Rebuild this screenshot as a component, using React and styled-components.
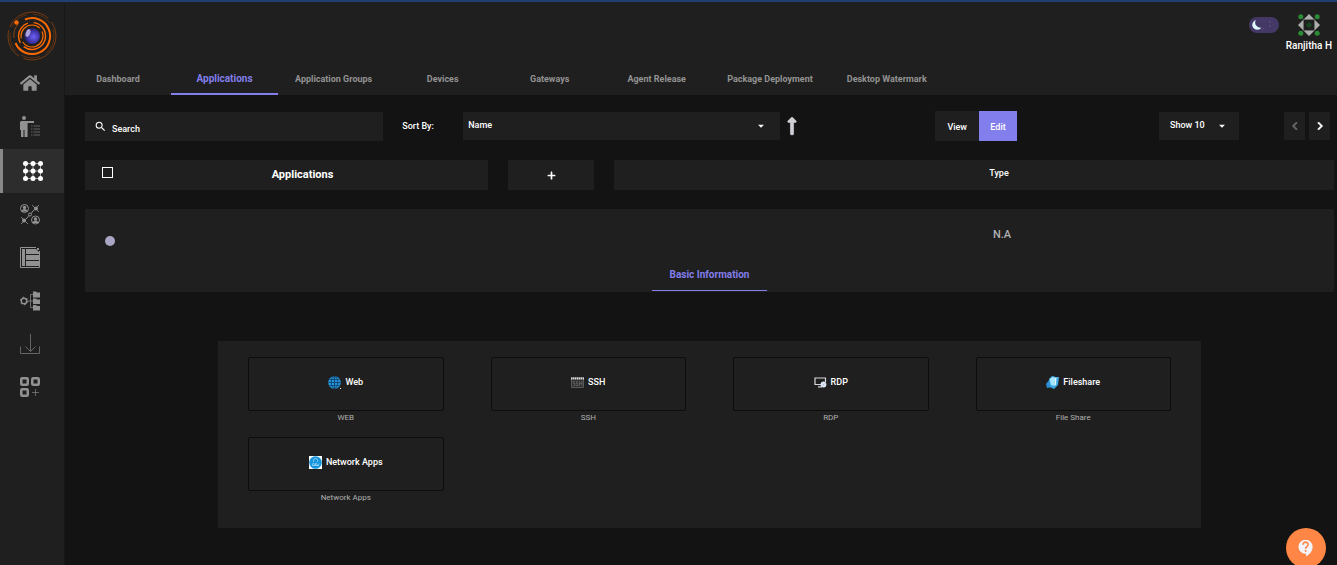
import { useState } from "react";
import styled, { createGlobalStyle } from "styled-components";
import {
	MdArrowDropDown,
	MdChevronLeft,
	MdChevronRight,
	MdContactSupport,
	MdSearch,
} from "react-icons/md";
import { FaHome, FaLongArrowAltUp, FaPlus } from "react-icons/fa";

const tabs = [
	"Dashboard",
	"Applications",
	"Application Groups",
	"Devices",
	"Gateways",
	"Agent Release",
	"Package Deployment",
	"Desktop Watermark",
];

const Logo = () => (
	<svg width="52" height="52" viewBox="0 0 52 52" fill="none">
		<defs>
			<radialGradient id="orb" cx="0.6" cy="0.55" r="0.6">
				<stop offset="0" stopColor="#6d62f5" />
				<stop offset="0.6" stopColor="#4034a8" />
				<stop offset="1" stopColor="#1d1747" />
			</radialGradient>
		</defs>
		<circle cx="26" cy="26" r="24" stroke="#7a3b10" strokeDasharray="46 5 30 3" />
		<circle cx="26" cy="26" r="22" stroke="#5c3012" strokeDasharray="20 6" />
		<path d="M19 9.5A18 18 0 1 1 9.5 33" stroke="#ff6a00" strokeWidth="2" />
		<path d="M12 14A18 18 0 0 0 8 28" stroke="#8a4210" />
		<circle cx="26" cy="26" r="13.5" stroke="#ff6a00" strokeWidth="1.4" strokeDasharray="30 5 24 6" />
		<circle cx="26" cy="26" r="11" stroke="#ff6a00" strokeWidth="1.2" strokeDasharray="28 4" />
		<circle cx="26" cy="26" r="8" fill="url(#orb)" />
		<ellipse cx="22" cy="23" rx="2.2" ry="4" fill="#a9a2dc" transform="rotate(20 22 23)" />
		<circle cx="10.5" cy="12.5" r="2.2" fill="#ff6a00" />
	</svg>
);

const UsersIcon = () => (
	<svg width="20" height="22" viewBox="0 0 20 22" fill="currentColor">
		<circle cx="4" cy="2" r="2" />
		<path d="M1 5h13v2H7v14H4.500v-7h-1v7H1v-7H0V6z" />
		<path d="M7.5 7v14M11 10h1.500M11 13h1.500M11 16h1.500M11 19h1.500M13.500 10H20M13.500 13H20M13.500 16H20M13.500 19H20" stroke="currentColor" opacity="0.6" />
	</svg>
);

const AppsIcon = () => (
	<svg width="20" height="20" viewBox="0 0 20 20" fill="currentColor">
		<path d="M2.5 2.5h15v15h-15zM2.5 10h15M10 2.5v15" fill="none" stroke="currentColor" opacity="0.6" />
		{[2.5, 10, 17.5].map((y) =>
			[2.5, 10, 17.5].map((x) => <circle key={`${x}-${y}`} cx={x} cy={y} r="2.5" />)
		)}
	</svg>
);

const GroupsIcon = () => (
	<svg width="20" height="21" viewBox="0 0 20 21" fill="none" stroke="currentColor">
		<circle cx="4.5" cy="4.5" r="4" />
		<circle cx="15.5" cy="16" r="4" />
		<path d="M6 15l9-10M12 1l7 7M19 1l-4 4-3 3M1 13l7 7M1 20l4-4 3-3" opacity="0.8" />
		<circle cx="10" cy="10.5" r="1.5" fill="#1f1f1f" />
		<g fill="currentColor" stroke="none">
			<circle cx="16" cy="4.5" r="2" />
			<circle cx="4" cy="16.5" r="2" />
			<circle cx="4.5" cy="3.5" r="1.7" />
			<path d="M1.500 7.500c0-3.500 6-3.500 6 0zM12.500 19c0-3.500 6-3.500 6 0z" />
			<circle cx="15.5" cy="15" r="1.7" />
		</g>
	</svg>
);

const PolicyIcon = () => (
	<svg width="20" height="21" viewBox="0 0 20 21" fill="currentColor">
		<path d="M16 .5H.5v20h19V4" fill="none" stroke="currentColor" />
		<path d="M2 2h3v17H2zM6 2h10l3 3v2H6zM6 8h13v5H6zM6 14h13v5H6z" />
		<path d="M17 1l2 2M19 1l-2 2" stroke="currentColor" />
	</svg>
);

const FoldersIcon = () => (
	<svg width="20" height="20" viewBox="0 0 20 20" fill="currentColor">
		<circle cx="4" cy="10" r="2.8" fill="none" stroke="currentColor" strokeWidth="1.4" />
		<circle cx="4" cy="10" r="3.8" fill="none" stroke="currentColor" strokeDasharray="1.6 2.4" />
		<path d="M8 10h5M13 3.500h-2.500v13H13" fill="none" stroke="currentColor" opacity="0.7" />
		<path d="M13 .5h3l1 1h3v5h-7zM13 7.500h3l1 1h3v4.500h-7zM13 14h3l1 1h3v4.500h-7z" />
	</svg>
);

const DownloadIcon = () => (
	<svg width="20" height="20" viewBox="0 0 20 20" fill="none" stroke="currentColor" opacity="0.6">
		<path d="M.5 12.500v7h19v-7M10.500 0v17.500M5.500 12.500l5 5 5-5" />
	</svg>
);

const WidgetsIcon = () => (
	<svg width="20" height="20" viewBox="0 0 20 20" fill="none" stroke="currentColor">
		<rect x="1.25" y="1.25" width="6.5" height="6.5" rx="1" strokeWidth="2.5" />
		<rect x="12.25" y="1.25" width="6.5" height="6.5" rx="1" strokeWidth="2.5" />
		<rect x="1.25" y="12.25" width="6.5" height="6.5" rx="1" strokeWidth="2.5" />
		<path d="M12 15.500h7M15.500 12v7" opacity="0.6" />
	</svg>
);

const MoonToggle = () => (
	<svg width="30" height="16" viewBox="0 0 30 16">
		<rect width="30" height="16" rx="8" fill="#433866" />
		<path d="M7 3a5 5 0 1 0 5.500 7.500A5 5 0 0 1 7 3z" fill="#dffaff" />
		<g fill="#665a8c">
			<circle cx="15" cy="4" r="0.6" />
			<circle cx="21" cy="5" r="0.8" />
			<circle cx="14" cy="12" r="0.6" />
			<circle cx="21" cy="9" r="0.8" />
			<circle cx="24" cy="7" r="0.5" />
		</g>
	</svg>
);

const Identicon = () => (
	<svg width="22" height="22" viewBox="0 0 22 22">
		<path d="M11 0l5.500 5.500h-11zM11 22l5.500-5.500h-11zM0 11l5.500-5.500v11zM22 11l-5.500-5.500v11z" fill="#adadad" />
		<path d="M5.5 5.500h11v11h-11z" fill="none" stroke="#6b706b" />
		<g fill="#2b8a35">
			<circle cx="2.8" cy="2.8" r="2.5" />
			<circle cx="19.2" cy="2.8" r="2.5" />
			<circle cx="2.8" cy="19.2" r="2.5" />
			<circle cx="19.2" cy="19.2" r="2.5" />
		</g>
		<path d="M11 8l3 3-3 3-3-3z" fill="#164a1c" />
	</svg>
);

const WebIcon = () => (
	<svg width="13" height="13" viewBox="0 0 13 13" fill="none">
		<circle cx="6.5" cy="6.5" r="6.3" fill="#2492d8" />
		<path d="M.5 6.500h12M6.500 0v13M1.500 3.500h10M1.500 9.500h10" stroke="#103f66" strokeWidth="0.8" />
		<ellipse cx="6.5" cy="6.5" rx="3.2" ry="6" stroke="#103f66" strokeWidth="0.8" />
		<path d="M12 12h1v1h-1z" fill="#fff" />
	</svg>
);

const SshIcon = () => (
	<svg width="13" height="11" viewBox="0 0 13 11" fill="none">
		<path d="M.5.5h12v10H.5z" fill="#303030" stroke="#5a5a5a" />
		<path d="M0 1.500h13" stroke="#ddd" strokeWidth="2" strokeDasharray="1.5 .5" />
		<path d="M4 4.500H2.500v2H4v2H2M7 4.500H5.500v2H7v2H5M8.500 4v5M11 4v5M8.500 6.500H11" stroke="#666" strokeWidth="0.8" />
	</svg>
);

const RdpIcon = () => (
	<svg width="13" height="11" viewBox="0 0 13 11" fill="none">
		<path d="M7 7.500H1V1h10.500v4M4 9.800h4" stroke="#d8d8dc" strokeWidth="1.2" />
		<circle cx="9.5" cy="7.5" r="2.9" fill="#dde4f4" />
		<path d="M8.500 8.500l2-2" stroke="#a9b2ca" strokeWidth="0.8" />
	</svg>
);

const FileshareIcon = () => (
	<svg width="13" height="13" viewBox="0 0 13 13">
		<path d="M0 8l3-4 3 7-5 1z" fill="#2a8fd2" />
		<path d="M3 3l3-3 4 1h3l-1 8-4 4-4-2z" fill="#3ba7e6" />
		<path d="M3.500 3L7 .8l2 1-.5 8L5 9z" fill="#a6e4fb" />
		<path d="M9 2l1.500-.5-.5 7L8.500 10z" fill="#e2f8ff" />
	</svg>
);

const NetworkIcon = () => (
	<svg width="13" height="13" viewBox="0 0 13 13" fill="none">
		<path d="M0 0h13v13H0z" fill="#fff" />
		<circle cx="6.5" cy="6.5" r="6.3" fill="#1896dc" />
		<path d="M4.500 6V4.500a2 2 0 0 1 4 0V6M3 9l1.500-2L6 9.500 7 7l1.500 2.500L10 7.500M3 9.500h7" stroke="#9bd5f5" strokeWidth="0.8" />
	</svg>
);

const navItems = [
	{ label: "Home", icon: <FaHome size={20} /> },
	{ label: "Users", icon: <UsersIcon /> },
	{ label: "Applications", icon: <AppsIcon /> },
	{ label: "Groups", icon: <GroupsIcon /> },
	{ label: "Policies", icon: <PolicyIcon /> },
	{ label: "Directories", icon: <FoldersIcon /> },
	{ label: "Downloads", icon: <DownloadIcon /> },
	{ label: "Widgets", icon: <WidgetsIcon /> },
];

const appTypes = [
	{ name: "Web", caption: "WEB", icon: <WebIcon /> },
	{ name: "SSH", caption: "SSH", icon: <SshIcon /> },
	{ name: "RDP", caption: "RDP", icon: <RdpIcon /> },
	{ name: "Fileshare", caption: "File Share", icon: <FileshareIcon /> },
	{ name: "Network Apps", caption: "Network Apps", icon: <NetworkIcon /> },
];

const App = () => {
	const [mode, setMode] = useState("Edit");

	return (
		<Page>
			<GlobalStyle />
			<Sidebar>
				<Brand href="#" aria-label="Main page">
					<Logo />
				</Brand>
				{navItems.map(({ label, icon }) => (
					<SideLink key={label} href="#" aria-label={label} $active={label === "Applications"}>
						{icon}
					</SideLink>
				))}
			</Sidebar>
			<Main>
				<Header>
					<Account>
						<ThemeButton aria-label="Toggle theme">
							<MoonToggle />
						</ThemeButton>
						<User>
							<Identicon />
							<span>Ranjitha H</span>
						</User>
					</Account>
					<Tabs>
						{tabs.map((tab) => (
							<Tab key={tab} href="#" $active={tab === "Applications"}>
								{tab}
							</Tab>
						))}
					</Tabs>
				</Header>
				<Content>
					<Toolbar>
						<Filters>
							<SearchBox>
								<MdSearch size={13} />
								<input type="text" placeholder="Search" aria-label="Search" />
							</SearchBox>
							<SortLabel htmlFor="sort">Sort By:</SortLabel>
							<SelectBox>
								<select id="sort">
									<option>Name</option>
								</select>
								<MdArrowDropDown size={14} />
							</SelectBox>
							<SortButton aria-label="Sort ascending">
								<FaLongArrowAltUp size={20} />
							</SortButton>
						</Filters>
						<Modes>
							{["View", "Edit"].map((item) => (
								<ModeButton key={item} $active={mode === item} onClick={() => setMode(item)}>
									{item}
								</ModeButton>
							))}
						</Modes>
						<PageSize>
							<select aria-label="Page size">
								<option>Show 10</option>
							</select>
							<MdArrowDropDown size={14} />
						</PageSize>
						<Pager>
							<PagerButton aria-label="Previous page" disabled>
								<MdChevronLeft size={16} />
							</PagerButton>
							<PagerButton aria-label="Next page">
								<MdChevronRight size={16} />
							</PagerButton>
						</Pager>
					</Toolbar>
					<Columns>
						<NameCell>
							<Checkbox type="checkbox" aria-label="Select all applications" />
							<span>Applications</span>
						</NameCell>
						<AddButton aria-label="Add application">
							<FaPlus size={9} />
						</AddButton>
						<TypeCell>Type</TypeCell>
					</Columns>
					<Record>
						<RecordRow>
							<Status />
							<RecordType>N.A</RecordType>
						</RecordRow>
						<InfoTab href="#">Basic Information</InfoTab>
					</Record>
					<TypePanel>
						{appTypes.map(({ name, caption, icon }) => (
							<TypeItem key={name}>
								<TypeButton>
									{icon}
									<span>{name}</span>
								</TypeButton>
								<Caption>{caption}</Caption>
							</TypeItem>
						))}
					</TypePanel>
				</Content>
			</Main>
			<HelpButton aria-label="Help">
				<MdContactSupport size={20} />
			</HelpButton>
		</Page>
	);
};

const GlobalStyle = createGlobalStyle`
	* {
		box-sizing: border-box;
	}

	body {
		margin: 0;
		background: #131313;
		color: #fff;
		font-family: Roboto, "Liberation Sans", sans-serif;
		font-size: 9px;
		font-weight: 500;
		line-height: 12px;
	}

	button, input, select {
		margin: 0;
		padding: 0;
		border: 0;
		background: none;
		color: inherit;
		font: inherit;
	}

	a {
		color: inherit;
		text-decoration: none;
	}

	svg {
		display: block;
		flex-shrink: 0;
	}
`;

const Page = styled.div`
	display: flex;
	min-height: 100vh;
	border-top: 2px solid #1f4070;
`;

const Sidebar = styled.nav`
	flex: 0 0 65px;
	display: flex;
	flex-direction: column;
	padding-top: 8px;
	background: #1f1f1f;
	border-right: 1px solid #181818;
`;

const Brand = styled.a`
	display: flex;
	justify-content: center;
	height: 51px;
`;

const SideLink = styled.a`
	display: flex;
	align-items: center;
	height: 43px;
	padding-left: 20px;
	color: #929292;

	&:nth-of-type(-n + 4) {
		height: 44px;
	}

	${({ $active }) =>
		$active &&
		`
		border-left: 3px solid #888;
		background: #2d2d2d;
		color: #fff;
	`}
`;

const Main = styled.div`
	flex: 1;
	min-width: 0;
`;

const Header = styled.header`
	display: flex;
	flex-direction: column;
	background: #1f1f1f;
`;

const Account = styled.div`
	display: flex;
	justify-content: flex-end;
	align-items: flex-start;
	gap: 7px;
	height: 60px;
	padding: 12px 5px 0 0;
`;

const ThemeButton = styled.button`
	padding-top: 3px;
`;

const User = styled.div`
	display: flex;
	flex-direction: column;
	align-items: center;
	gap: 4px;
	font-size: 10px;
`;

const Tabs = styled.nav`
	display: flex;
`;

const Tab = styled.a`
	min-width: 107px;
	height: 33px;
	padding: 11px 17px 0;
	text-align: center;
	white-space: nowrap;
	font-size: ${({ $active }) => ($active ? 10 : 9)}px;
	font-weight: 700;
	color: ${({ $active }) => ($active ? "#827eeb" : "#939393")};
	border-bottom: 2px solid ${({ $active }) => ($active ? "#827eeb" : "transparent")};

	&:first-child {
		min-width: 106px;
	}
`;

const Content = styled.main`
	padding: 16px 3px 0 20px;
`;

const Toolbar = styled.div`
	display: flex;
	align-items: center;
	height: 30px;
	padding-right: 4px;
`;

const Filters = styled.div`
	flex: 1;
	display: flex;
	align-items: center;
`;

const SearchBox = styled.label`
	flex: 289 1 0;
	display: flex;
	align-items: center;
	gap: 5px;
	height: 29px;
	padding-left: 9px;
	background: #1f1f1f;

	input {
		flex: 1;
		min-width: 0;
		padding-top: 5px;
		outline: none;
	}

	input::placeholder {
		color: #fff;
		opacity: 1;
	}
`;

const SortLabel = styled.label`
	width: 80px;
	padding-left: 19px;
`;

const SelectBox = styled.div`
	flex: 317 1 0;
	display: grid;
	align-items: center;
	height: 28px;
	background: #1f1f1f;

	select {
		grid-area: 1 / 1;
		appearance: none;
		height: 100%;
		padding: 0 24px 2px 5px;
		outline: none;
	}

	svg {
		grid-area: 1 / 1;
		justify-self: end;
		margin-right: 12px;
		pointer-events: none;
	}
`;

const PageSize = styled(SelectBox)`
	flex: 0 0 80px;
	margin-left: 142px;

	select {
		padding-left: 11px;
	}

	svg {
		margin-right: 10px;
	}
`;

const SortButton = styled.button`
	display: flex;
	justify-content: center;
	width: 24px;
	color: #d0d0d8;

	svg {
		stroke-width: 16px;
	}
`;

const Modes = styled.div`
	display: flex;
	margin-left: 131px;
`;

const ModeButton = styled.button`
	height: 30px;
	min-width: 38px;
	padding: 1px 12px 0;
	background: ${({ $active }) => ($active ? "#827eeb" : "#1f1f1f")};

	&:last-child {
		padding: 1px 10px 0;
	}
`;

const Pager = styled.div`
	display: flex;
	gap: 4px;
	margin-left: 45px;
`;

const PagerButton = styled.button`
	display: flex;
	align-items: center;
	justify-content: center;
	width: 21px;
	height: 28px;
	background: #1f1f1f;
	color: #fff;

	path:not([fill="none"]) {
		stroke: currentColor;
		stroke-width: 1px;
	}

	path[fill="none"] {
		stroke: none;
	}

	&:disabled {
		color: #6a6a6a;
	}
`;

const Columns = styled.div`
	display: grid;
	grid-template-columns: 403fr 86fr 720fr;
	gap: 20px;
	height: 30px;
	margin-top: 19px;
`;

const NameCell = styled.div`
	display: flex;
	align-items: center;
	padding-left: 17px;
	background: #1f1f1f;
	font-size: 11px;
	font-weight: 700;

	span {
		flex: 1;
		padding-left: 4px;
		text-align: center;
	}
`;

const Checkbox = styled.input`
	appearance: none;
	width: 11px;
	height: 11px;
	margin-bottom: 5px;
	border: 1px solid #fff;

	&:checked {
		background: #827eeb;
	}
`;

const AddButton = styled.button`
	display: flex;
	align-items: center;
	justify-content: center;
	background: #1f1f1f;
`;

const TypeCell = styled.div`
	padding: 7px 0 0 50px;
	background: #1f1f1f;
	text-align: center;
`;

const Record = styled.section`
	display: flex;
	flex-direction: column;
	align-items: center;
	margin-top: 19px;
	padding-bottom: 1px;
	background: #1f1f1f;
	border-radius: 2px;
`;

const RecordRow = styled.div`
	align-self: stretch;
	display: grid;
	grid-template-columns: 529fr 720fr;
	align-items: center;
	height: 50px;
`;

const Status = styled.span`
	width: 10px;
	height: 10px;
	margin: 14px 0 0 20px;
	border-radius: 50%;
	background: #a8a5c5;
`;

const RecordType = styled.span`
	padding: 2px 0 0 56px;
	text-align: center;
	font-size: 11px;
	color: #b0b0b0;
`;

const InfoTab = styled.a`
	height: 32px;
	padding: 10px 18px 0;
	border-bottom: 1px solid #827eeb;
	font-size: 10px;
	font-weight: 700;
	color: #827eeb;
`;

const TypePanel = styled.section`
	display: grid;
	grid-template-columns: repeat(4, 1fr);
	gap: 13px 47px;
	margin: 49px 133px 0;
	padding: 16px 30px 24px;
	background: #1f1f1f;
`;

const TypeItem = styled.div`
	display: flex;
	flex-direction: column;
`;

const TypeButton = styled.button`
	display: flex;
	align-items: center;
	justify-content: center;
	gap: 4px;
	height: 54px;
	padding-bottom: 4px;
	border: 1px solid #0d0d0d;
	border-radius: 2px;
`;

const Caption = styled.span`
	height: 13px;
	line-height: 14px;
	text-align: center;
	font-size: 8px;
	font-weight: 400;
	color: #b0b0b0;
`;

const HelpButton = styled.button`
	position: fixed;
	right: 11px;
	bottom: -3px;
	display: flex;
	align-items: center;
	justify-content: center;
	width: 40px;
	height: 40px;
	border-radius: 50%;
	background: #ff8644;
	color: #f3f3fa;
`;

export default App;
